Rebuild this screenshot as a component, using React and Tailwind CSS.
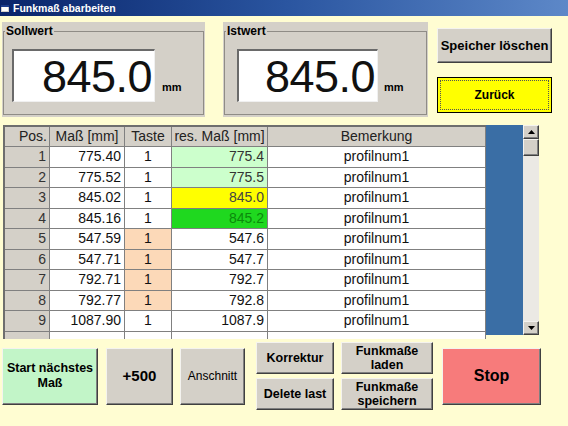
import React from "react";

const raised =
  "border border-t-[#f4f3ef] border-l-[#f4f3ef] border-r-[#404040] border-b-[#404040] shadow-[inset_-1px_-1px_0_#808080]";

const rows = [
  { p: "1", m: "775.40", t: "1", r: "775.4", tc: "bg-white", rc: "bg-[#ccffcc] text-[#333]" },
  { p: "2", m: "775.52", t: "1", r: "775.5", tc: "bg-white", rc: "bg-[#ccffcc] text-[#333]" },
  { p: "3", m: "845.02", t: "1", r: "845.0", tc: "bg-white", rc: "bg-[#ffff00] text-[#444]" },
  { p: "4", m: "845.16", t: "1", r: "845.2", tc: "bg-white", rc: "bg-[#1fd81f] text-[#0b8a0b]" },
  { p: "5", m: "547.59", t: "1", r: "547.6", tc: "bg-[#fcd9b8]", rc: "bg-white text-[#111]" },
  { p: "6", m: "547.71", t: "1", r: "547.7", tc: "bg-[#fcd9b8]", rc: "bg-white text-[#111]" },
  { p: "7", m: "792.71", t: "1", r: "792.7", tc: "bg-[#fcd9b8]", rc: "bg-white text-[#111]" },
  { p: "8", m: "792.77", t: "1", r: "792.8", tc: "bg-[#fcd9b8]", rc: "bg-white text-[#111]" },
  { p: "9", m: "1087.90", t: "1", r: "1087.9", tc: "bg-white", rc: "bg-white text-[#111]" },
];

const cols = "grid grid-cols-[45px_75px_47px_96px_218px]";
const cell = "border-r border-b border-[#808080] leading-[19px] text-[14px] overflow-hidden whitespace-nowrap";

function GroupBox({ label, width, boxWidth, boxLeft, mmGap }) {
  return (
    <div className={`bg-[#d4d0c8] h-[95px] px-[1px] pt-[2px] ${width}`}>
      <fieldset className="h-[91px] border border-[#8f8c86] px-[1px]">
        <legend className="px-[1px] text-[12px] font-bold leading-[14px]">{label}</legend>
        <div className={`flex items-end mt-[11px] ${boxLeft}`}>
          <div
            className={`h-[53px] bg-white border-t-2 border-l-2 border-t-[#6a6a6a] border-l-[#6a6a6a] border-b border-r border-b-[#f0f0f0] border-r-[#f0f0f0] flex items-center justify-end pr-[2px] ${boxWidth}`}
          >
            <span className="text-[45px] leading-none tracking-[-0.5px] text-[#111]">845.0</span>
          </div>
          <span className={`mb-[9px] text-[11px] font-bold leading-none ${mmGap}`}>mm</span>
        </div>
      </fieldset>
    </div>
  );
}

function Arrow({ up }) {
  return (
    <svg width="7" height="4" viewBox="0 0 7 4">
      <path d={up ? "M0 4 L3.5 0 L7 4 Z" : "M0 0 L3.5 4 L7 0 Z"} fill="#000" />
    </svg>
  );
}

export default function App() {
  return (
    <div className="w-[568px] h-[426px] overflow-hidden bg-[#fffdd2] flex flex-col font-['Liberation_Sans',Arial,sans-serif] text-black">
      {/* title bar */}
      <div className="h-[16px] flex items-center gap-[4px] px-[1px] bg-linear-to-r from-[#0a246a] via-[#2a55a0] to-[#5d88c8]">
        <svg width="8" height="7" viewBox="0 0 8 7">
          <rect x="0" y="0" width="8" height="7" fill="#d4d0c8" />
          <rect x="1" y="2" width="6" height="4" fill="#fff" />
          <rect x="0" y="0" width="8" height="2" fill="#1c3c8c" />
        </svg>
        <span className="text-white font-bold text-[10.5px] leading-none">Funkmaß abarbeiten</span>
      </div>

      {/* top */}
      <div className="flex mt-[6px]">
        <div className="ml-[2px]">
          <GroupBox label="Sollwert" width="w-[203px]" boxWidth="w-[143px]" boxLeft="ml-[7px]" mmGap="ml-[7px]" />
        </div>
        <div className="ml-[18px]">
          <GroupBox label="Istwert" width="w-[205px]" boxWidth="w-[141px]" boxLeft="ml-[11px]" mmGap="ml-[6px]" />
        </div>
        <div className="ml-[9px] w-[115px] pt-[6px] flex flex-col">
          <button className={`h-[35px] bg-[#d4d0c8] text-[13px] font-bold ${raised}`}>Speicher löschen</button>
          <button className="mt-[14px] h-[36px] bg-[#ffff00] border border-black p-[2px]">
            <div className="h-full border border-dotted border-[#555] flex items-center justify-center text-[12px] font-bold">
              Zurück
            </div>
          </button>
        </div>
      </div>

      {/* table */}
      <div className="mt-[8px] ml-[3px] h-[214px] w-[536px] flex">
        <div className="w-[483px] h-full overflow-hidden border-l-2 border-t-2 border-[#6e6e6e] bg-white">
          <div className={`${cols} h-[20px] bg-[#d4d0c8] text-[#222]`}>
            <div className={`${cell} text-right pr-[2px]`}>Pos.</div>
            <div className={`${cell} text-center`}>Maß [mm]</div>
            <div className={`${cell} text-center`}>Taste</div>
            <div className={`${cell} text-center`}>res. Maß [mm]</div>
            <div className={`${cell} text-center`}>Bemerkung</div>
          </div>
          {rows.map((r) => (
            <div key={r.p} className={`${cols} h-[20.5px] text-[#111]`}>
              <div className={`${cell} bg-[#d4d0c8] text-[#333] text-right pr-[3px]`}>{r.p}</div>
              <div className={`${cell} text-right pr-[3px]`}>{r.m}</div>
              <div className={`${cell} text-center ${r.tc}`}>{r.t}</div>
              <div className={`${cell} text-right pr-[3px] ${r.rc}`}>{r.r}</div>
              <div className={`${cell} text-center`}>profilnum1</div>
            </div>
          ))}
          <div className={`${cols} h-[20px]`}>
            <div className={`${cell} bg-[#d4d0c8]`}></div>
            <div className={cell}></div>
            <div className={cell}></div>
            <div className={cell}></div>
            <div className={cell}></div>
          </div>
        </div>
        <div className="w-[37px] h-[210px] bg-[#3a6ea5]"></div>
        <div className="w-[16px] h-[210px] bg-[#ebe9e4] flex flex-col">
          <div className={`h-[14px] bg-[#d4d0c8] flex items-center justify-center ${raised}`}>
            <Arrow up />
          </div>
          <div className={`h-[17px] bg-[#d4d0c8] ${raised}`}></div>
          <div className="flex-1"></div>
          <div className={`h-[14px] bg-[#d4d0c8] flex items-center justify-center ${raised}`}>
            <Arrow />
          </div>
        </div>
      </div>

      {/* bottom buttons */}
      <div className="flex items-center mt-[3px] h-[68px]">
        <button className={`ml-[2px] w-[96px] h-[57px] bg-[#c2f5c8] text-[12.5px] font-bold leading-[15px] ${raised}`}>
          Start nächstes
          <br />
          Maß
        </button>
        <button className={`ml-[8px] w-[67px] h-[57px] bg-[#d4d0c8] text-[15px] font-bold ${raised}`}>+500</button>
        <button className={`ml-[7px] w-[65px] h-[57px] bg-[#d4d0c8] text-[12px] ${raised}`}>Anschnitt</button>
        <div className="ml-[11px] w-[78px] h-[68px] flex flex-col gap-[4px]">
          <button className={`h-[32px] bg-[#d4d0c8] text-[12.5px] font-bold ${raised}`}>Korrektur</button>
          <button className={`h-[32px] bg-[#d4d0c8] text-[12.5px] font-bold ${raised}`}>Delete last</button>
        </div>
        <div className="ml-[7px] w-[92px] h-[68px] flex flex-col gap-[4px]">
          <button className={`h-[32px] bg-[#d4d0c8] text-[12.5px] font-bold leading-[14px] ${raised}`}>
            Funkmaße
            <br />
            laden
          </button>
          <button className={`h-[32px] bg-[#d4d0c8] text-[12.5px] font-bold leading-[14px] ${raised}`}>
            Funkmaße
            <br />
            speichern
          </button>
        </div>
        <button className={`ml-[9px] w-[99px] h-[57px] bg-[#f77b7b] text-[16px] font-bold ${raised}`}>Stop</button>
      </div>
    </div>
  );
}
